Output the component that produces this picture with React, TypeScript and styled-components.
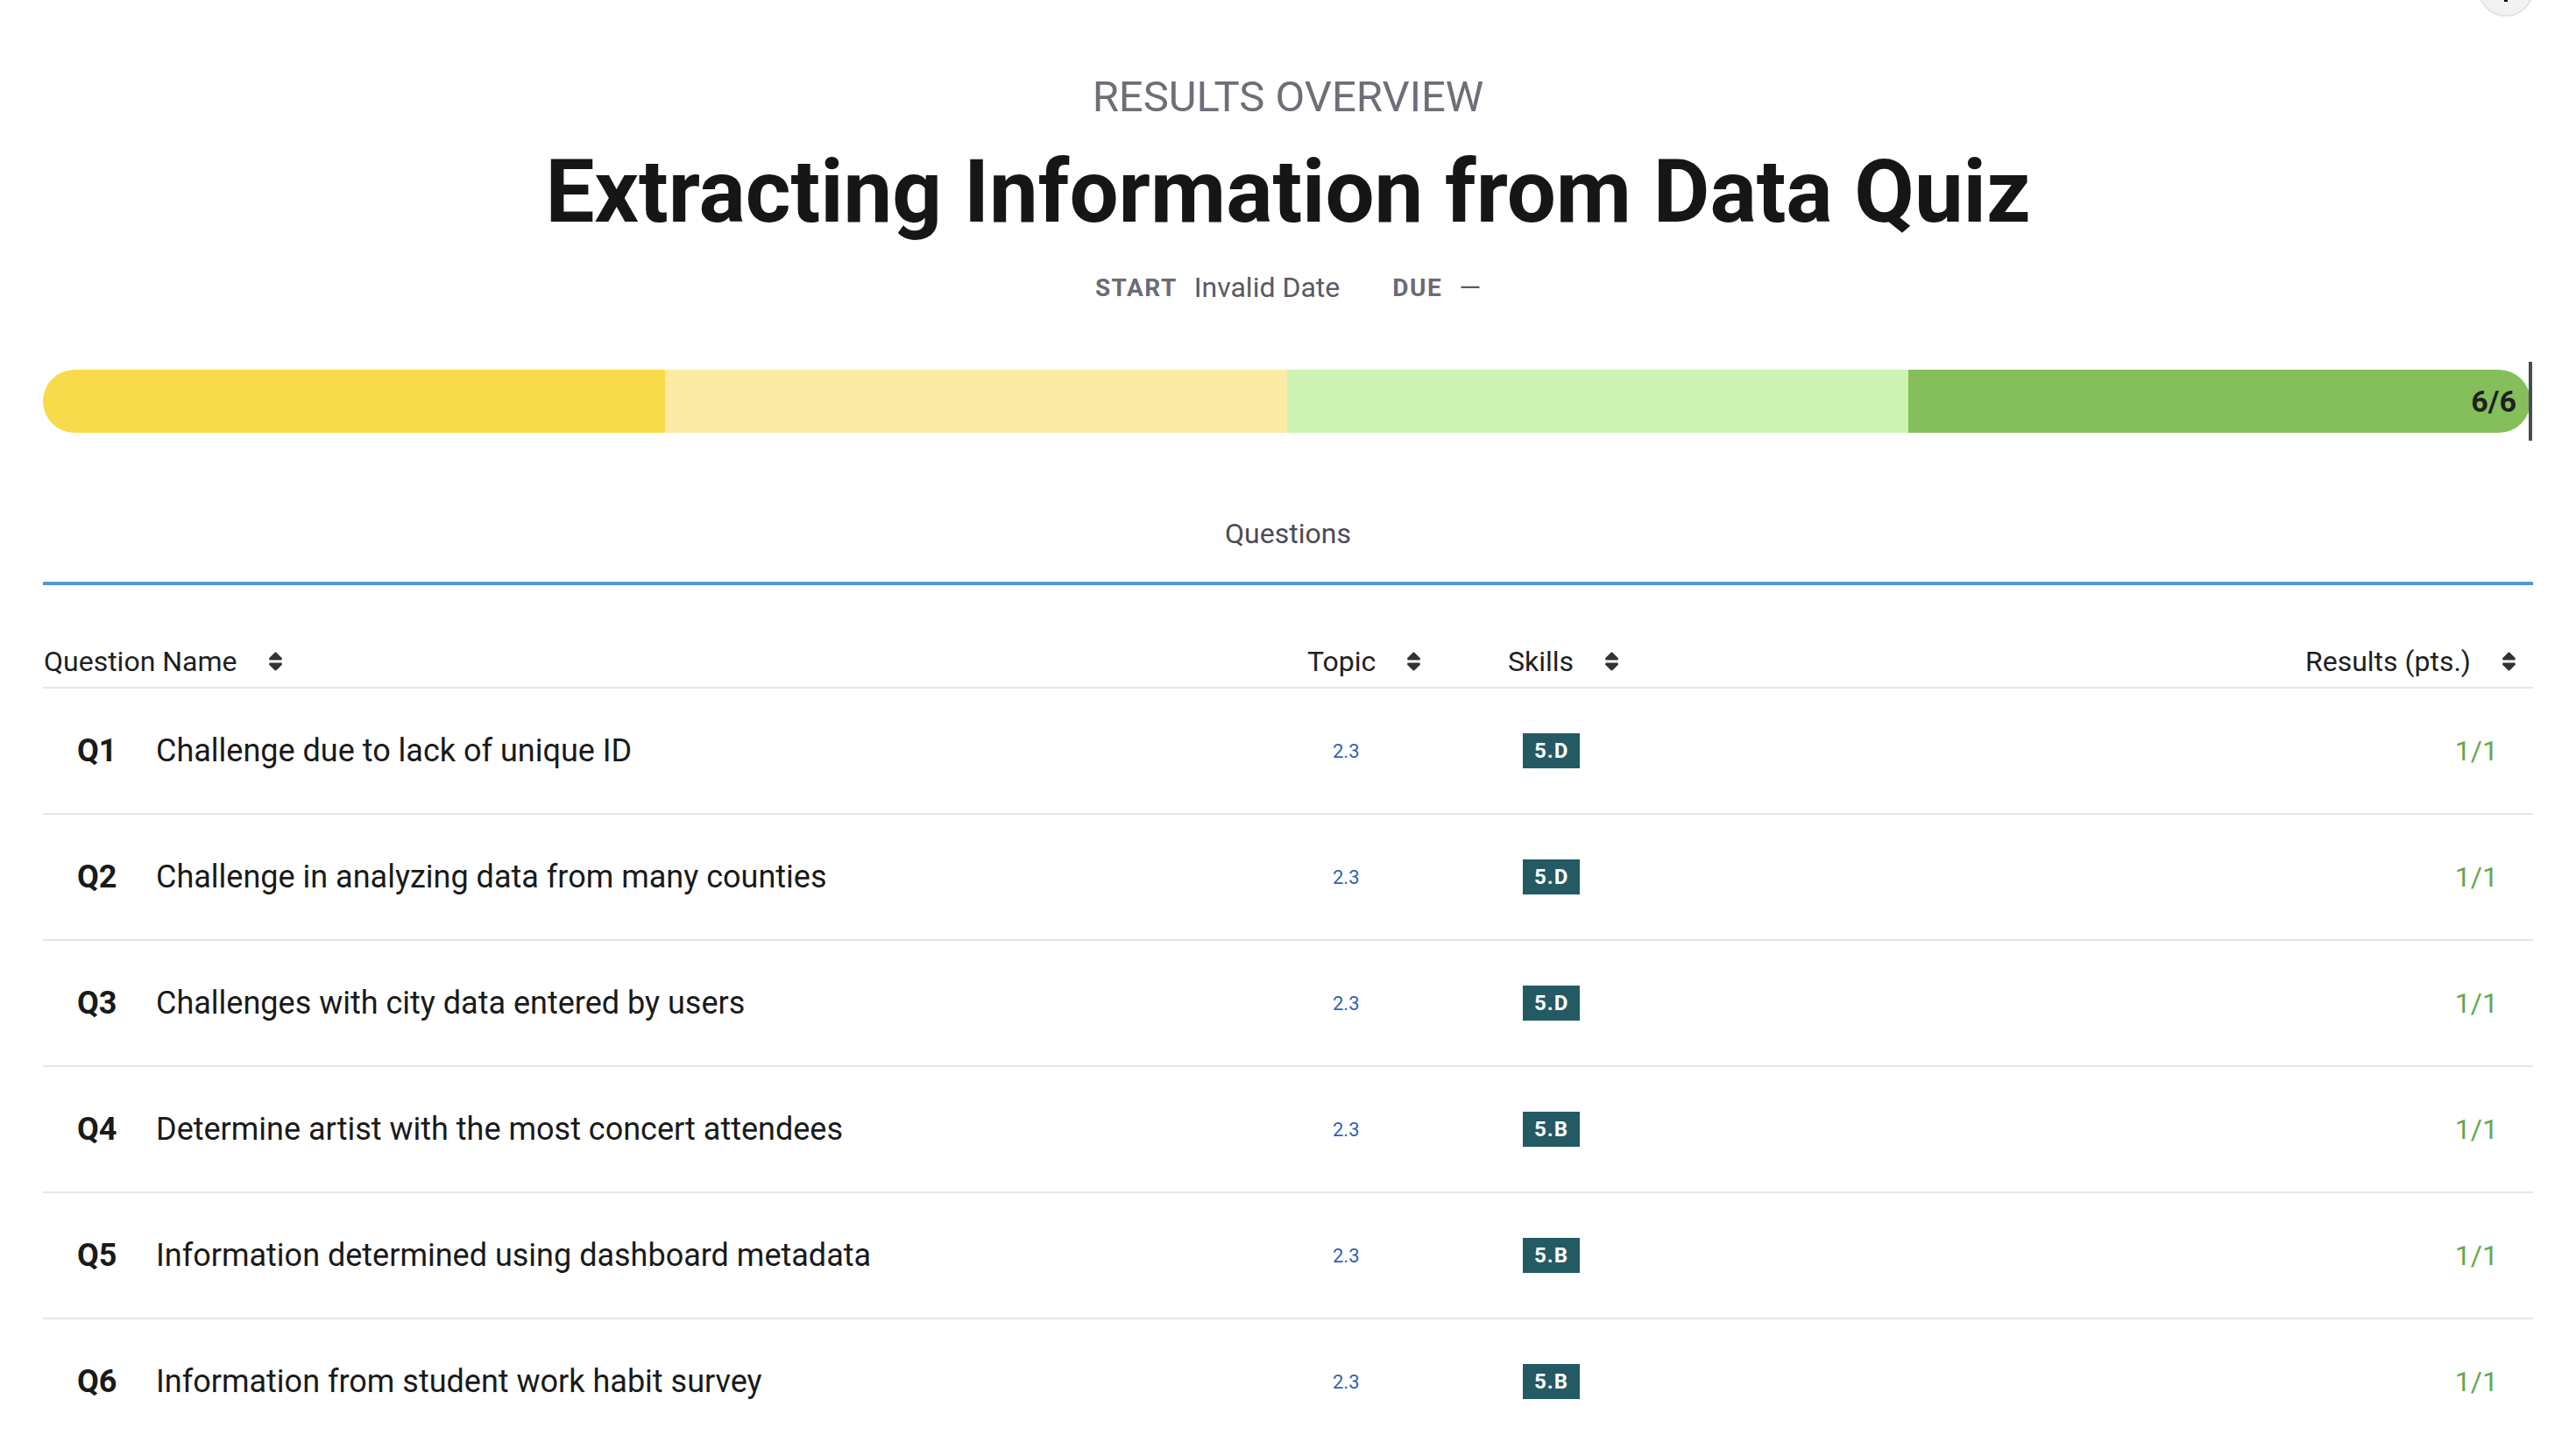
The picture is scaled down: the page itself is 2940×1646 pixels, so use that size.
import React from "react";
import styled, { createGlobalStyle } from "styled-components";

const GlobalStyle = createGlobalStyle`
  html, body {
    margin: 0;
    padding: 0;
    background: #ffffff;
  }
  body {
    font-family: Roboto, "Liberation Sans", Arial, sans-serif;
    color: #1c1c1c;
  }
  * {
    box-sizing: border-box;
  }
`;

const Page = styled.div`
  position: relative;
  height: 1646px;
  overflow: hidden;
  padding: 82px 49px 0;
`;

// round button peeking in from the top edge
const CornerButton = styled.button`
  position: absolute;
  top: -45px;
  right: 48px;
  width: 64px;
  height: 64px;
  border-radius: 50%;
  border: 2px solid #e4e4e4;
  background: #f2f2f2;
  padding: 0;
  display: flex;
  align-items: center;
  justify-content: center;
`;

const Overview = styled.header`
  display: flex;
  flex-direction: column;
  align-items: center;
`;

const Eyebrow = styled.div`
  font-size: 49px;
  line-height: 58px;
  color: #6e6e78;
  text-transform: uppercase;
`;

const Title = styled.h1`
  margin: 19px 0 0;
  font-size: 99.5px;
  line-height: 120px;
  font-weight: 700;
  color: #161616;
`;

const Dates = styled.div`
  margin-top: 30px;
  display: flex;
  align-items: center;
  height: 38px;
`;

const DateLabel = styled.span<{ $gapLeft?: number }>`
  margin-left: ${(p) => p.$gapLeft ?? 0}px;
  font-size: 28px;
  font-weight: 700;
  letter-spacing: 1.5px;
  color: #6b6b75;
`;

const DateValue = styled.span`
  margin-left: 19px;
  font-size: 32px;
  color: #5a5a64;
`;

const Progress = styled.div`
  position: relative;
  margin-top: 75px;
`;

const Track = styled.div`
  display: flex;
  height: 72px;
  margin-right: 3px;
  border-radius: 36px;
  overflow: hidden;
`;

const Segment = styled.div<{ $color: string }>`
  flex: 1;
  background: ${(p) => p.$color};
  display: flex;
  align-items: center;
  justify-content: flex-end;
`;

const Count = styled.span`
  padding-right: 16px;
  font-size: 34px;
  font-weight: 700;
  color: #1f1f1f;
`;

const Marker = styled.div`
  position: absolute;
  right: 1px;
  top: -9px;
  bottom: -9px;
  width: 4px;
  background: #4a4a55;
`;

const Tabs = styled.nav`
  margin-top: 60px;
  display: flex;
  justify-content: center;
  border-bottom: 4px solid #5398d1;
`;

const Tab = styled.div`
  padding: 36px 0;
  font-size: 32px;
  line-height: 38px;
  color: #4b4b55;
`;

const columns = "1421px 230px 1fr auto";

const HeadRow = styled.div`
  display: grid;
  grid-template-columns: ${columns};
  align-items: end;
  height: 118px;
  padding-bottom: 10px;
  border-bottom: 2px solid #e6e6e6;
`;

const HeadCell = styled.div<{ $pl?: number; $pr?: number }>`
  display: flex;
  align-items: center;
  gap: 36px;
  padding-left: ${(p) => p.$pl ?? 0}px;
  padding-right: ${(p) => p.$pr ?? 0}px;
  font-size: 32px;
  line-height: 38px;
  color: #1f1f1f;
`;

const Row = styled.div`
  display: grid;
  grid-template-columns: ${columns};
  align-items: center;
  height: 144px;
  border-bottom: 2px solid #e6e6e6;
`;

const NameCell = styled.div`
  display: flex;
  align-items: center;
  padding-left: 39px;
  font-size: 36px;
  color: #1a1a1a;
`;

const QLabel = styled.span`
  width: 90px;
  font-weight: 700;
`;

const TopicCell = styled.div`
  padding-left: 51px;
  font-size: 22px;
  color: #2f63b6;
`;

const SkillCell = styled.div`
  padding-left: 38px;
`;

const Badge = styled.span`
  display: inline-flex;
  align-items: center;
  height: 40px;
  padding: 0 13px;
  background: #245a63;
  color: #ffffff;
  font-size: 24px;
  font-weight: 700;
  letter-spacing: 1px;
`;

const ResultCell = styled.div`
  padding-right: 40px;
  font-size: 32px;
  color: #65a84d;
  text-align: right;
`;

function SortIcon() {
  return (
    <svg width="15" height="24" viewBox="0 0 320 512" fill="#333333">
      <path d="M137.4 41.4c12.5-12.5 32.8-12.5 45.3 0l128 128c9.2 9.2 11.9 22.9 6.9 34.9s-16.6 19.8-29.6 19.8H32c-12.9 0-24.6-7.8-29.6-19.8s-2.2-25.7 6.9-34.9l128-128zm0 429.3l-128-128c-9.2-9.2-11.9-22.9-6.9-34.9s16.6-19.8 29.6-19.8H288c12.9 0 24.6 7.8 29.6 19.8s2.2 25.7-6.9 34.9l-128 128c-12.5 12.5-32.8 12.5-45.3 0z" />
    </svg>
  );
}

const questions = [
  { id: "Q1", name: "Challenge due to lack of unique ID", skill: "5.D" },
  { id: "Q2", name: "Challenge in analyzing data from many counties", skill: "5.D" },
  { id: "Q3", name: "Challenges with city data entered by users", skill: "5.D" },
  { id: "Q4", name: "Determine artist with the most concert attendees", skill: "5.B" },
  { id: "Q5", name: "Information determined using dashboard metadata", skill: "5.B" },
  { id: "Q6", name: "Information from student work habit survey", skill: "5.B" },
];

const segments = ["#f7db4a", "#fbeba5", "#ccf3b4", "#84bf5c"];

export default function App() {
  return (
    <>
      <GlobalStyle />
      <Page>
        <CornerButton aria-label="Scroll to top">
          <svg width="30" height="30" viewBox="0 0 30 30" fill="none" stroke="#000" strokeWidth="4">
            <path d="M15 30V6" />
            <path d="M7 13l8-7 8 7" />
          </svg>
        </CornerButton>

        <Overview>
          <Eyebrow>Results Overview</Eyebrow>
          <Title>Extracting Information from Data Quiz</Title>
          <Dates>
            <DateLabel>START</DateLabel>
            <DateValue>Invalid Date</DateValue>
            <DateLabel $gapLeft={60}>DUE</DateLabel>
            <DateValue>—</DateValue>
          </Dates>
        </Overview>

        <Progress>
          <Track>
            {segments.map((c, i) => (
              <Segment key={i} $color={c}>
                {i === segments.length - 1 && <Count>6/6</Count>}
              </Segment>
            ))}
          </Track>
          <Marker />
        </Progress>

        <Tabs>
          <Tab>Questions</Tab>
        </Tabs>

        <HeadRow>
          <HeadCell $pl={1}>
            Question Name <SortIcon />
          </HeadCell>
          <HeadCell $pl={22}>
            Topic <SortIcon />
          </HeadCell>
          <HeadCell $pl={21}>
            Skills <SortIcon />
          </HeadCell>
          <HeadCell $pr={20}>
            Results (pts.) <SortIcon />
          </HeadCell>
        </HeadRow>

        {questions.map((q) => (
          <Row key={q.id}>
            <NameCell>
              <QLabel>{q.id}</QLabel>
              {q.name}
            </NameCell>
            <TopicCell>2.3</TopicCell>
            <SkillCell>
              <Badge>{q.skill}</Badge>
            </SkillCell>
            <ResultCell>1/1</ResultCell>
          </Row>
        ))}
      </Page>
    </>
  );
}
